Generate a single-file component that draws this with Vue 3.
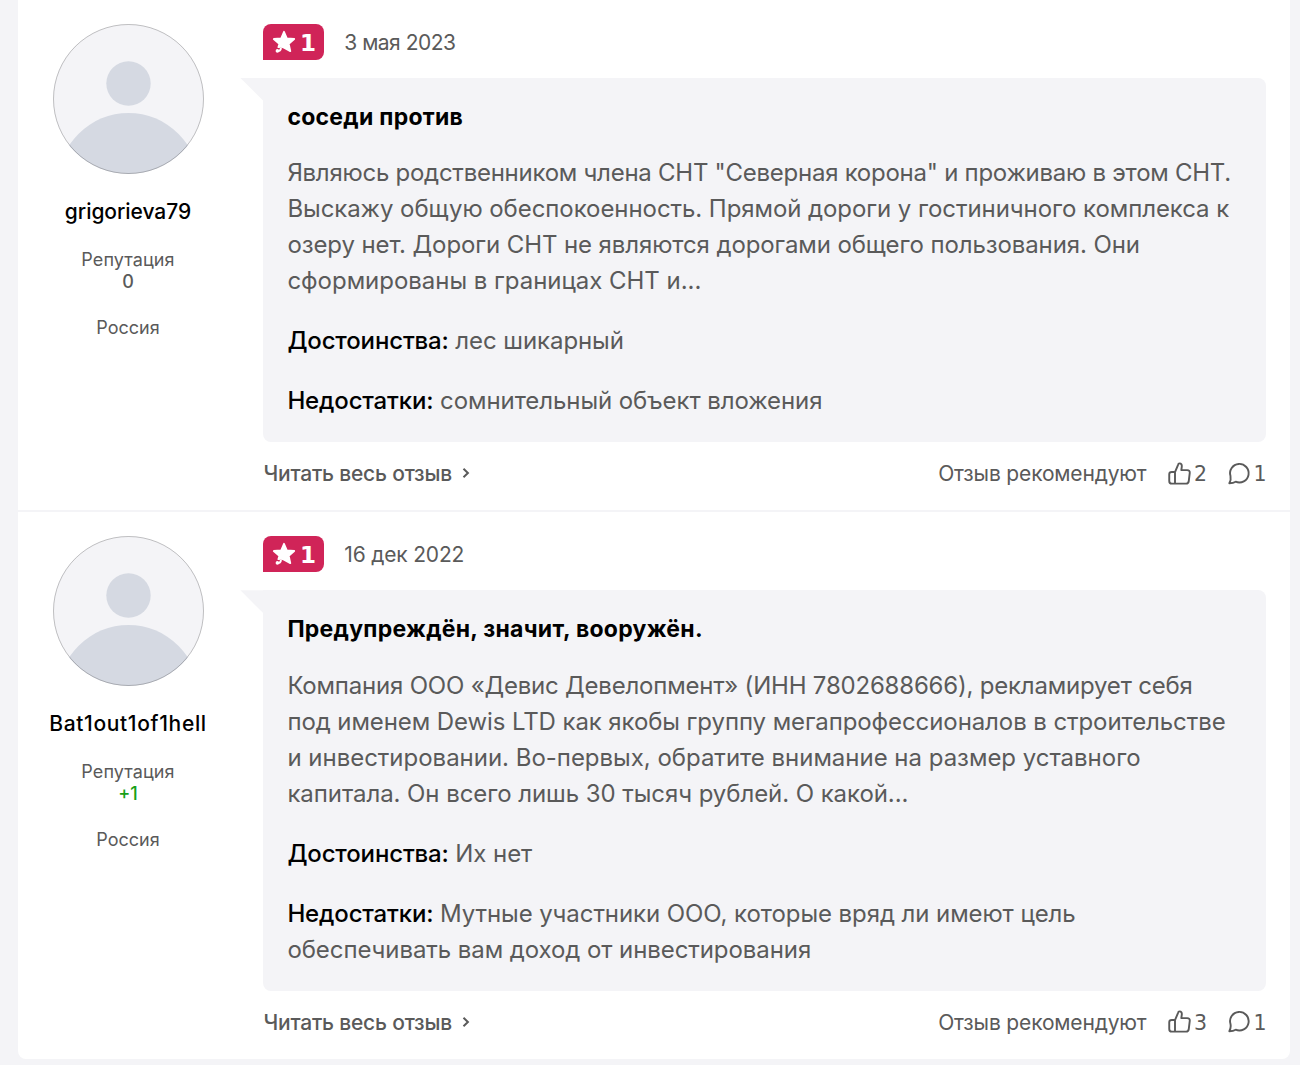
<template>
  <div class="reviews">
    <article v-for="review in reviews" :key="review.id" class="review">
      <aside class="author">
        <svg class="author-avatar" viewBox="0 0 151 150">
          <defs>
            <clipPath :id="'avatar-' + review.id">
              <ellipse cx="75.5" cy="75" rx="75.5" ry="75" />
            </clipPath>
          </defs>
          <g :clip-path="`url(#avatar-${review.id})`">
            <rect width="151" height="150" fill="#f4f4f7" />
            <circle cx="75.5" cy="59.5" r="22.2" fill="#d5d9e2" />
            <circle cx="75.5" cy="159.5" r="70.5" fill="#d5d9e2" />
          </g>
          <ellipse cx="75.5" cy="75" rx="75" ry="74.5" fill="none" stroke="#000" stroke-opacity="0.22" />
        </svg>
        <div class="author-name" :style="{ letterSpacing: review.authorTracking + 'px' }">
          {{ review.author }}
        </div>
        <div class="author-info">Репутация</div>
        <div class="author-karma" :class="{ positive: review.karma > 0 }">
          {{ review.karma > 0 ? '+' + review.karma : review.karma }}
        </div>
        <div class="author-info author-country">{{ review.country }}</div>
      </aside>

      <div class="review-main">
        <header class="review-header">
          <span class="rating">
            <svg class="rating-star" viewBox="0 0 24 24">
              <path
                d="M12 1.8 14.8 8.3 22.2 9 16.7 13.8 18.3 21.1 12 17.6Q9.6 16.4 6.4 17.2L7.3 13.8 1.8 9 9.2 8.3Z"
                fill="#fff"
                stroke="#fff"
                stroke-width="1.8"
                stroke-linejoin="round"
              />
              <path d="M5.6 21Q8.4 21.6 9 18" fill="none" stroke="#fff" stroke-width="2" />
              <circle cx="5.4" cy="20.9" r="1.8" fill="#fff" />
            </svg>
            <span class="rating-value">{{ review.rating }}</span>
          </span>
          <span class="review-date" :style="{ letterSpacing: review.dateTracking + 'px' }">
            {{ review.date }}
          </span>
        </header>

        <div class="bubble">
          <h3 class="bubble-title">{{ review.title }}</h3>
          <p class="bubble-text">
            <span
              v-for="line in review.lines"
              :key="line.text"
              class="bubble-line"
              :style="{ letterSpacing: line.tracking + 'px' }"
            >{{ line.text }}</span>
          </p>
          <p class="bubble-text"><b>Достоинства:</b> {{ review.pros }}</p>
          <p class="bubble-text"><b>Недостатки:</b> {{ review.cons }}</p>
        </div>

        <footer class="review-footer">
          <a class="read-more">
            <span>Читать весь отзыв</span>
            <svg class="read-more-arrow" viewBox="0 0 8 12">
              <path d="M1.5 1.8 5.9 6 1.5 10.2" fill="none" stroke="currentColor" stroke-width="2" />
            </svg>
          </a>
          <span class="recommend">Отзыв рекомендуют</span>
          <span class="counter">
            <svg class="counter-icon" viewBox="0 0 24 24">
              <path
                d="M7.3 10.6 10.4 3.2Q10.8 1.4 12 1.4C13.8 1.4 14.6 3 14.4 4.8L13.9 8.5H20Q23 8.7 22.7 11.4L21.7 19.6Q21.3 22.6 18.8 22.6H4Q1.3 22.6 1.3 19.7V12.7Q1.3 10.5 4 10.5H7.3V22.4"
              />
            </svg>
            <span class="counter-value">{{ review.likes }}</span>
          </span>
          <span class="counter">
            <svg class="counter-icon" viewBox="0 0 24 24">
              <path d="M2.6 14.6A9.7 9.7 0 1 1 8 20.6Q5.6 22 1.4 22.2 3.4 18.4 2.6 14.6Z" />
            </svg>
            <span class="counter-value">{{ review.comments }}</span>
          </span>
        </footer>
      </div>
    </article>
  </div>
</template>

<script setup>
// tracking is the letter spacing of a text, in px
const reviews = [
  {
    id: 1,
    author: 'grigorieva79',
    authorTracking: -0.05,
    karma: 0,
    country: 'Россия',
    rating: 1,
    date: '3 мая 2023',
    dateTracking: -0.5,
    title: 'соседи против',
    lines: [
      { text: 'Являюсь родственником члена СНТ "Северная корона" и проживаю в этом СНТ.', tracking: -0.26 },
      { text: 'Выскажу общую обеспокоенность. Прямой дороги у гостиничного комплекса к', tracking: -0.07 },
      { text: 'озеру нет. Дороги СНТ не являются дорогами общего пользования. Они', tracking: -0.1 },
      { text: 'сформированы в границах СНТ и...', tracking: -0.03 },
    ],
    pros: 'лес шикарный',
    cons: 'сомнительный объект вложения',
    likes: 2,
    comments: 1,
  },
  {
    id: 2,
    author: 'Bat1out1of1hell',
    authorTracking: 0.66,
    karma: 1,
    country: 'Россия',
    rating: 1,
    date: '16 дек 2022',
    dateTracking: -0.18,
    title: 'Предупреждён, значит, вооружён.',
    lines: [
      { text: 'Компания ООО «Девис Девелопмент» (ИНН 7802688666), рекламирует себя', tracking: -0.2 },
      { text: 'под именем Dewis LTD как якобы группу мегапрофессионалов в строительстве', tracking: -0.09 },
      { text: 'и инвестировании. Во-первых, обратите внимание на размер уставного', tracking: -0.02 },
      { text: 'капитала. Он всего лишь 30 тысяч рублей. О какой...', tracking: -0.07 },
    ],
    pros: 'Их нет',
    cons: 'Мутные участники ООО, которые вряд ли имеют цель обеспечивать вам доход от инвестирования',
    likes: 3,
    comments: 1,
  },
]
</script>

<style>
body {
  background: #f4f4f7;
}
</style>

<style scoped>
.reviews {
  box-sizing: border-box;
  width: 1272px;
  height: 1059px;
  margin-left: 17.5px;
  background: #fff;
  border-radius: 0 0 8px 8px;
  font-family: Inter, 'Noto Sans', sans-serif;
  color: #5a5a5a;
}

.review {
  display: flex;
  padding: 24px 24px 0 0;
}

.review + .review {
  border-top: 2px solid #f4f4f7;
}

.author {
  display: flex;
  flex-direction: column;
  align-items: center;
  width: 221px;
  margin-right: 24.9px;
  flex-shrink: 0;
}

.author-avatar {
  width: 151px;
  height: 150px;
}

.author-name {
  margin-top: 24px;
  font-size: 21px;
  line-height: 28px;
  font-weight: 500;
  color: #000;
}

.author-info,
.author-karma {
  font-size: 18px;
  line-height: 22px;
}

.author-info {
  letter-spacing: 0.1px;
}

.author-name + .author-info {
  margin-top: 23px;
}

.author-karma {
  font-weight: 500;
}

.author-karma.positive {
  color: #18a018;
}

.author-country {
  margin-top: 24px;
  letter-spacing: 0;
}

.review-main {
  flex: 1;
  min-width: 0;
}

.review-header {
  display: flex;
  align-items: center;
  height: 36px;
  margin-bottom: 18px;
}

.rating {
  display: flex;
  align-items: center;
  box-sizing: border-box;
  width: 60.4px;
  height: 36px;
  padding-left: 8.5px;
  gap: 4px;
  background: #d02458;
  border-radius: 8px 8px 8px 0;
  color: #fff;
}

.rating-star {
  width: 24px;
  height: 24px;
}

.rating-value {
  padding-top: 1px;
  font-family: 'DejaVu Sans', sans-serif;
  font-size: 23px;
  line-height: 36px;
  font-weight: 700;
}

.review-date {
  margin-left: 20.5px;
  padding-top: 2px;
  font-size: 21px;
  line-height: 28px;
}

.bubble {
  position: relative;
  padding: 24px 24px 23px;
  background: #f4f4f7;
  border-radius: 0 8px 8px 8px;
}

.bubble::before {
  content: '';
  position: absolute;
  top: 0;
  left: -23px;
  width: 24px;
  height: 24px;
  background: inherit;
  clip-path: polygon(0 0, 100% 0, 100% 100%);
}

.bubble-title {
  margin: 0 0 23px;
  padding-top: 1px;
  font-size: 23px;
  line-height: 29.3px;
  font-weight: 700;
  letter-spacing: 0.27px;
  color: #000;
}

.bubble-text {
  margin: 0;
  font-size: 24px;
  line-height: 36px;
  letter-spacing: -0.08px;
}

.bubble-text + .bubble-text {
  margin-top: 24px;
}

.bubble-text b {
  font-weight: 500;
  letter-spacing: -0.15px;
  color: #000;
}

.bubble-line {
  display: block;
  white-space: nowrap;
}

.review-footer {
  display: flex;
  align-items: center;
  height: 28px;
  padding: 18px 0 22px;
  font-size: 21px;
  line-height: 28px;
  letter-spacing: -0.16px;
}

.read-more {
  display: flex;
  align-items: center;
  margin-right: auto;
  gap: 10px;
  font-weight: 500;
  letter-spacing: -0.2px;
}

.read-more-arrow {
  width: 8px;
  height: 12px;
  margin-top: -2px;
}

.counter {
  display: flex;
  align-items: center;
  margin-left: 21.5px;
  gap: 3px;
}

.counter-icon {
  width: 23px;
  height: 23px;
  margin-top: -2px;
  fill: none;
  stroke: currentColor;
  stroke-width: 2;
  stroke-linejoin: round;
}

.counter-value {
  margin-right: -0.9px;
  font-family: 'DejaVu Sans', sans-serif;
  font-size: 20.5px;
}
</style>
